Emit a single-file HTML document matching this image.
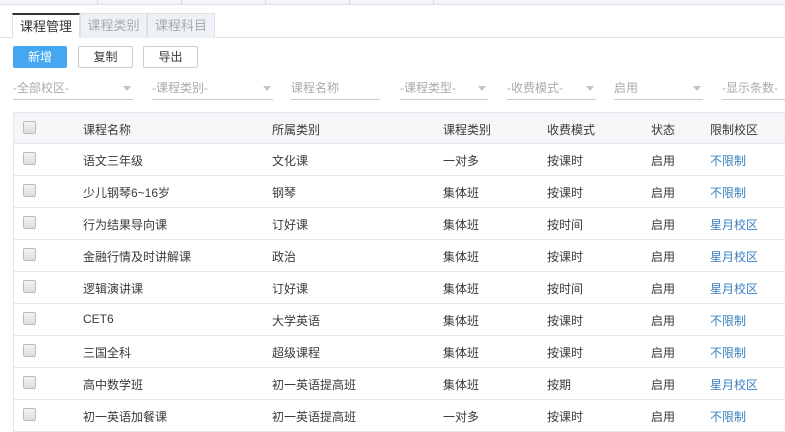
<!DOCTYPE html>
<html><head><meta charset="utf-8"><style>
*{margin:0;padding:0;box-sizing:border-box}
body{width:785px;height:432px;overflow:hidden;background:#fff;font-family:"Liberation Sans","Noto Sans CJK SC",sans-serif;font-size:12px;color:#3a3a3a;position:relative}
.a{position:absolute}
.top{left:0;top:0;width:785px;height:5px;background:#f2f4f7;border-bottom:1px solid #dde1e6}
.dv{top:0;width:1px;height:5px;background:#d4d8dd}
.tab{top:13px;height:25px;line-height:24px;text-align:center;font-size:13px;border:1px solid #dde1e6;border-bottom:none}
.btn{top:46px;height:22px;line-height:20px;text-align:center;border:1px solid #ccc;border-radius:2px;font-size:12px;background:#fff}
.f{top:79px;height:21px;border-bottom:1px solid #ccc;color:#aaa;font-size:12px;line-height:18px}
.f i{position:absolute;right:2px;top:7px;border:4px solid transparent;border-top:5px solid #c4c4c4}
.row{left:13px;width:772px;height:32px;border-bottom:1px solid #e3e6ea;border-left:1px solid #e3e6ea}
.row span{position:absolute;top:8px;font-size:12px}
.cb{position:absolute;left:9px;top:8px;width:13px;height:13px;border:1px solid #bbb;border-radius:2px;background:linear-gradient(#f4f4f4,#ddd)}
.l{color:#3a80c0}
</style></head><body>
<div class="a top"></div>
<div class="a dv" style="left:97px"></div><div class="a dv" style="left:181px"></div><div class="a dv" style="left:265px"></div><div class="a dv" style="left:349px"></div><div class="a dv" style="left:433px"></div>
<div class="a" style="left:0;top:37px;width:785px;height:1px;background:#dde1e6"></div>
<div class="a tab" style="left:12px;width:68px;background:#fff;border-top:2px solid #333;color:#333;height:25px">课程管理</div>
<div class="a tab" style="left:80px;width:67px;background:#eef1f5;color:#aaa">课程类别</div>
<div class="a tab" style="left:147px;width:68px;background:#eef1f5;color:#aaa">课程科目</div>
<div class="a btn" style="left:13px;width:54px;background:#45a7f2;border-color:#45a7f2;color:#fff">新增</div>
<div class="a btn" style="left:78px;width:55px">复制</div>
<div class="a btn" style="left:143px;width:55px">导出</div>
<div class="a f" style="left:13px;width:120px">-全部校区-<i></i></div>
<div class="a f" style="left:152px;width:121px">-课程类别-<i></i></div>
<div class="a f" style="left:291px;width:89px">课程名称</div>
<div class="a f" style="left:400px;width:88px">-课程类型-<i></i></div>
<div class="a f" style="left:507px;width:89px">-收费模式-<i></i></div>
<div class="a f" style="left:614px;width:89px">启用<i></i></div>
<div class="a f" style="left:722px;width:70px">-显示条数-</div>
<div class="a row" style="top:112px;background:#f5f6f8;border-top:1px solid #e3e6ea"><div class="cb"></div><span style="left:69px">课程名称</span><span style="left:258px">所属类别</span><span style="left:429px">课程类别</span><span style="left:533px">收费模式</span><span style="left:637px">状态</span><span style="left:696px">限制校区</span></div>
<div class="a row" style="top:144px"><div class="cb"></div><span style="left:69px">语文三年级</span><span style="left:258px">文化课</span><span style="left:429px">一对多</span><span style="left:533px">按课时</span><span style="left:637px">启用</span><span class="l" style="left:696px">不限制</span></div>
<div class="a row" style="top:176px"><div class="cb"></div><span style="left:69px">少儿钢琴6~16岁</span><span style="left:258px">钢琴</span><span style="left:429px">集体班</span><span style="left:533px">按课时</span><span style="left:637px">启用</span><span class="l" style="left:696px">不限制</span></div>
<div class="a row" style="top:208px"><div class="cb"></div><span style="left:69px">行为结果导向课</span><span style="left:258px">订好课</span><span style="left:429px">集体班</span><span style="left:533px">按时间</span><span style="left:637px">启用</span><span class="l" style="left:696px">星月校区</span></div>
<div class="a row" style="top:240px"><div class="cb"></div><span style="left:69px">金融行情及时讲解课</span><span style="left:258px">政治</span><span style="left:429px">集体班</span><span style="left:533px">按课时</span><span style="left:637px">启用</span><span class="l" style="left:696px">星月校区</span></div>
<div class="a row" style="top:272px"><div class="cb"></div><span style="left:69px">逻辑演讲课</span><span style="left:258px">订好课</span><span style="left:429px">集体班</span><span style="left:533px">按时间</span><span style="left:637px">启用</span><span class="l" style="left:696px">星月校区</span></div>
<div class="a row" style="top:304px"><div class="cb"></div><span style="left:69px">CET6</span><span style="left:258px">大学英语</span><span style="left:429px">集体班</span><span style="left:533px">按课时</span><span style="left:637px">启用</span><span class="l" style="left:696px">不限制</span></div>
<div class="a row" style="top:336px"><div class="cb"></div><span style="left:69px">三国全科</span><span style="left:258px">超级课程</span><span style="left:429px">集体班</span><span style="left:533px">按课时</span><span style="left:637px">启用</span><span class="l" style="left:696px">不限制</span></div>
<div class="a row" style="top:368px"><div class="cb"></div><span style="left:69px">高中数学班</span><span style="left:258px">初一英语提高班</span><span style="left:429px">集体班</span><span style="left:533px">按期</span><span style="left:637px">启用</span><span class="l" style="left:696px">星月校区</span></div>
<div class="a row" style="top:400px"><div class="cb"></div><span style="left:69px">初一英语加餐课</span><span style="left:258px">初一英语提高班</span><span style="left:429px">一对多</span><span style="left:533px">按课时</span><span style="left:637px">启用</span><span class="l" style="left:696px">不限制</span></div>
</body></html>
